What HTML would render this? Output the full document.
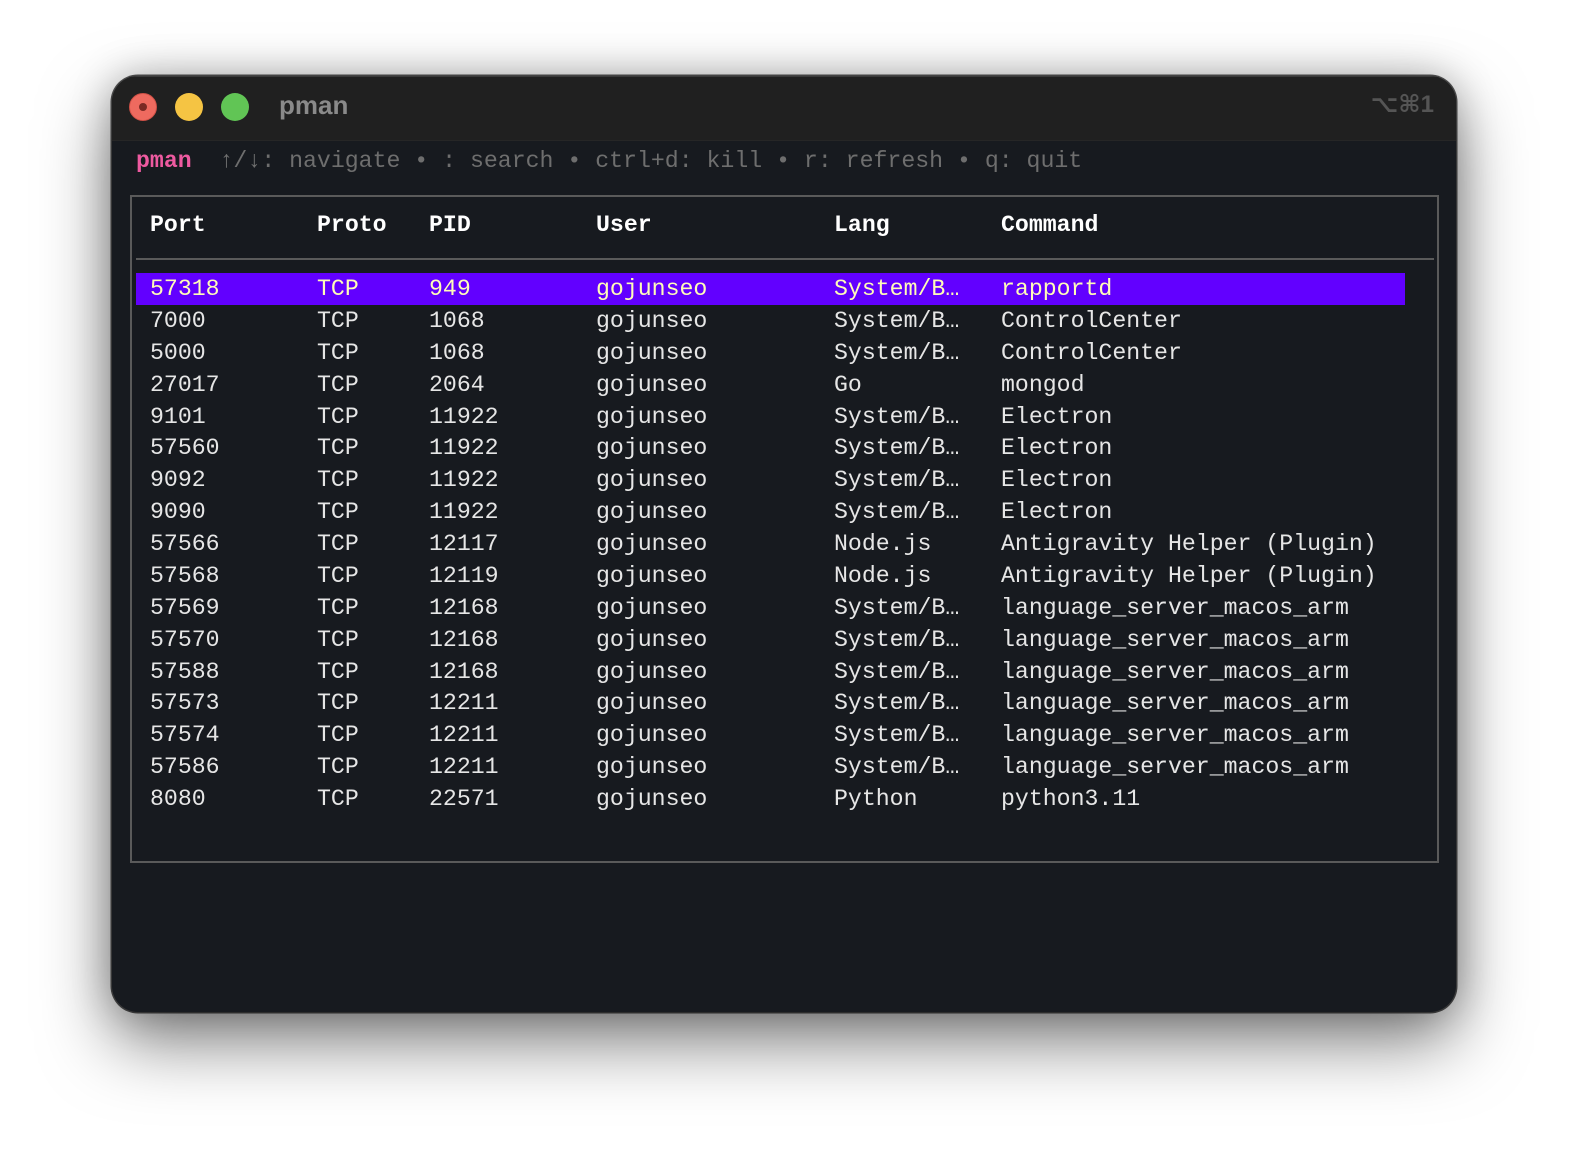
<!DOCTYPE html>
<html><head><meta charset="utf-8"><style>
html,body{margin:0;padding:0;}
body{width:1574px;height:1162px;background:#fff;position:relative;overflow:hidden;font-family:"Liberation Mono",monospace;}
.win{position:absolute;left:112px;top:76px;width:1344px;height:936px;border-radius:26px;background:#171a1f;box-shadow:0 30px 70px rgba(0,0,0,0.5),0 0 40px rgba(0,0,0,0.25),0 0 0 1.5px #555;overflow:hidden;}
.tb{position:absolute;left:0;top:0;width:100%;height:64px;background:#202020;border-bottom:1px solid #262626;box-shadow:inset 0 1px 0 #3a3a3a;}
.dot{position:absolute;top:17px;width:28px;height:28px;border-radius:50%;}
.title{position:absolute;left:167px;top:14px;font:bold 26px "Liberation Sans",sans-serif;color:#8a8a8a;}
.kb{position:absolute;right:22px;top:14px;font:bold 24px "Liberation Sans","DejaVu Sans",sans-serif;color:#555;}
.t{position:absolute;white-space:pre;font-size:23.2px;line-height:32px;}
.box{position:absolute;left:130px;top:195px;width:1309px;height:668px;border:2px solid #5a5a5a;box-sizing:border-box;}
</style></head><body>
<div class="win">
<div class="tb">
<div class="dot" style="left:17px;background:#ee6a5f;border:1px solid #d05046;box-sizing:border-box"><div style="position:absolute;left:9px;top:9px;width:8px;height:8px;border-radius:50%;background:#7a2a24"></div></div>
<div class="dot" style="left:63px;background:#f5c443"></div>
<div class="dot" style="left:109px;background:#61c555"></div>
<div class="title">pman</div>
<div class="kb">⌥⌘1</div>
</div>
</div>
<div class="t" style="left:136px;top:145px;color:#6e6e6e"><span style="color:#ee5aa0;font-weight:bold">pman</span>  ↑/↓: navigate • : search • ctrl+d: kill • r: refresh • q: quit</div>
<div class="box"></div>
<div style="position:absolute;left:136px;top:258px;width:1298px;height:2px;background:#5a5a5a"></div>
<div style="position:absolute;left:136px;top:273px;width:1269px;height:32px;background:#6200ff"></div>
<div id="rows"></div>
<div class="t" style="left:150px;top:209px;color:#fff;font-weight:bold">Port</div>
<div class="t" style="left:317px;top:209px;color:#fff;font-weight:bold">Proto</div>
<div class="t" style="left:429px;top:209px;color:#fff;font-weight:bold">PID</div>
<div class="t" style="left:596px;top:209px;color:#fff;font-weight:bold">User</div>
<div class="t" style="left:834px;top:209px;color:#fff;font-weight:bold">Lang</div>
<div class="t" style="left:1001px;top:209px;color:#fff;font-weight:bold">Command</div>
<script>
var d=[["57318","949","System/B…","rapportd"],["7000","1068","System/B…","ControlCenter"],["5000","1068","System/B…","ControlCenter"],["27017","2064","Go","mongod"],["9101","11922","System/B…","Electron"],["57560","11922","System/B…","Electron"],["9092","11922","System/B…","Electron"],["9090","11922","System/B…","Electron"],["57566","12117","Node.js","Antigravity Helper (Plugin)"],["57568","12119","Node.js","Antigravity Helper (Plugin)"],["57569","12168","System/B…","language_server_macos_arm"],["57570","12168","System/B…","language_server_macos_arm"],["57588","12168","System/B…","language_server_macos_arm"],["57573","12211","System/B…","language_server_macos_arm"],["57574","12211","System/B…","language_server_macos_arm"],["57586","12211","System/B…","language_server_macos_arm"],["8080","22571","Python","python3.11"]];
var h="";d.forEach(function(r,i){var y=273+i*31.875;var c=i==0?"#fffcb8":"#e6e6e6";
var cells=[[150,r[0]],[317,"TCP"],[429,r[1]],[596,"gojunseo"],[834,r[2]],[1001,r[3]]];
cells.forEach(function(k){h+='<div class="t" style="left:'+k[0]+'px;top:'+y+'px;color:'+c+'">'+k[1]+'</div>';});});
document.getElementById("rows").innerHTML=h;
</script>
</body></html>
